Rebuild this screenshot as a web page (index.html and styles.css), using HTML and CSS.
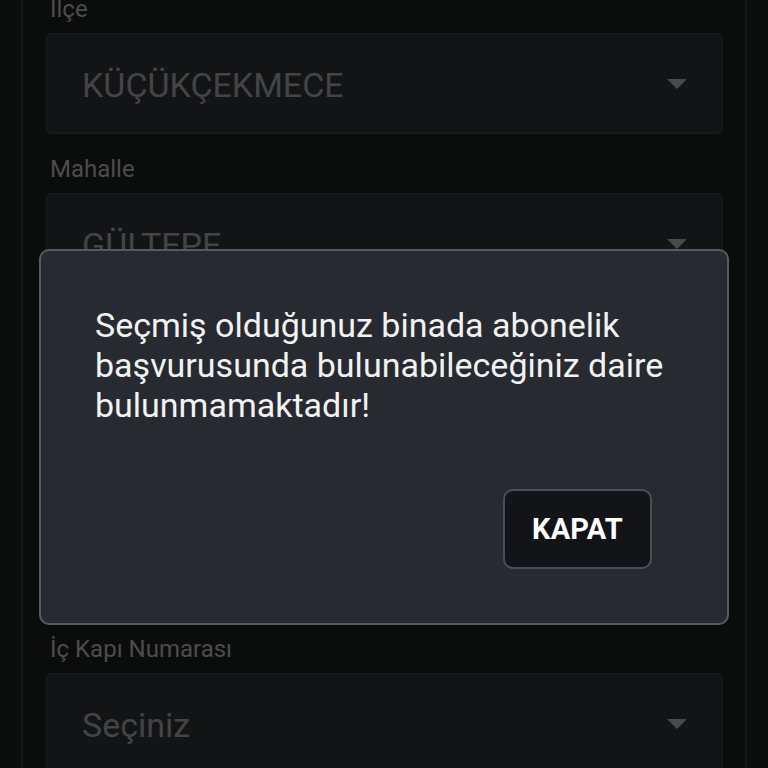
FILE: index.html
```html
<!DOCTYPE html>
<html lang="tr">
<head>
<meta charset="utf-8">
<title>Abonelik Başvurusu</title>
<link rel="stylesheet" href="styles.css">
</head>
<body>
<div class="screen">
  <main class="panel">
    <form class="form">
      <div class="field">
        <label class="field-label">İlçe</label>
        <div class="select">
          <span class="select-value">KÜÇÜKÇEKMECE</span>
          <span class="caret"></span>
        </div>
      </div>
      <div class="field">
        <label class="field-label">Mahalle</label>
        <div class="select">
          <span class="select-value">GÜLTEPE</span>
          <span class="caret"></span>
        </div>
      </div>
      <div class="field">
        <label class="field-label">Cadde / Sokak</label>
        <div class="select">
          <span class="select-value">Seçiniz</span>
          <span class="caret"></span>
        </div>
      </div>
      <div class="field">
        <label class="field-label">Dış Kapı Numarası</label>
        <div class="select">
          <span class="select-value">Seçiniz</span>
          <span class="caret"></span>
        </div>
      </div>
      <div class="field">
        <label class="field-label">İç Kapı Numarası</label>
        <div class="select">
          <span class="select-value">Seçiniz</span>
          <span class="caret"></span>
        </div>
      </div>
    </form>
  </main>

  <div class="dialog" role="alertdialog">
    <p class="dialog-text">Seçmiş olduğunuz binada abonelik başvurusunda bulunabileceğiniz daire bulunmamaktadır!</p>
    <div class="dialog-actions">
      <button class="btn-close" type="button">KAPAT</button>
    </div>
  </div>
</div>
</body>
</html>
```

FILE: styles.css
```css
* {
  box-sizing: border-box;
}

html, body {
  margin: 0;
  padding: 0;
  height: 100%;
}

body {
  background: #0b0c0c;
  font-family: Roboto, "Noto Sans", "Liberation Sans", sans-serif;
  overflow: hidden;
}

.screen {
  position: relative;
  width: 768px;
  height: 768px;
  overflow: hidden;
}

/* scrolled content column with faint side rules */
.panel {
  display: flow-root;
  margin-left: 21px;
  width: 726px;
  height: 100%;
  border-left: 2px solid #17181a;
  border-right: 2px solid #17181a;
  padding: 0 22px 0 23px;
}

.form {
  margin-top: -26px;
  display: flex;
  flex-direction: column;
}

.field {
  padding-top: 21px;
  display: flex;
  flex-direction: column;
}

.field-label {
  font-size: 24px;
  line-height: 28px;
  color: #4c4c4d;
  padding-left: 4px;
  margin-bottom: 10px;
}

.select {
  height: 101px;
  flex-shrink: 0;
  border: 1px solid #1b1c1e;
  border-radius: 5px;
  background: #131416;
  display: flex;
  align-items: center;
  justify-content: space-between;
  padding: 0 35px 0 35px;
}

.select-value {
  font-size: 34px;
  color: #434445;
  padding-top: 3px;
}

.caret {
  width: 0;
  height: 0;
  border-left: 10px solid transparent;
  border-right: 10px solid transparent;
  border-top: 10px solid #4a4a4b;
}

/* alert dialog over the form */
.dialog {
  position: absolute;
  left: 39px;
  top: 249px;
  width: 690px;
  height: 376px;
  background: #272a31;
  border: 2px solid #565a61;
  border-radius: 10px;
  padding: 54px 40px 54px 54px;
  display: flex;
  flex-direction: column;
  justify-content: space-between;
}

.dialog-text {
  margin: 0;
  font-size: 34px;
  line-height: 40px;
  color: #f2f2f2;
}

.dialog-actions {
  display: flex;
  justify-content: flex-end;
  padding-right: 35px;
}

.btn-close {
  width: 149px;
  height: 80px;
  background: #131418;
  border: 2px solid #4a4e55;
  border-radius: 10px;
  color: #ffffff;
  font-family: Roboto, "Noto Sans", "Liberation Sans", sans-serif;
  font-size: 29px;
  font-weight: 700;
  letter-spacing: 0.2px;
  padding: 0;
}
```
